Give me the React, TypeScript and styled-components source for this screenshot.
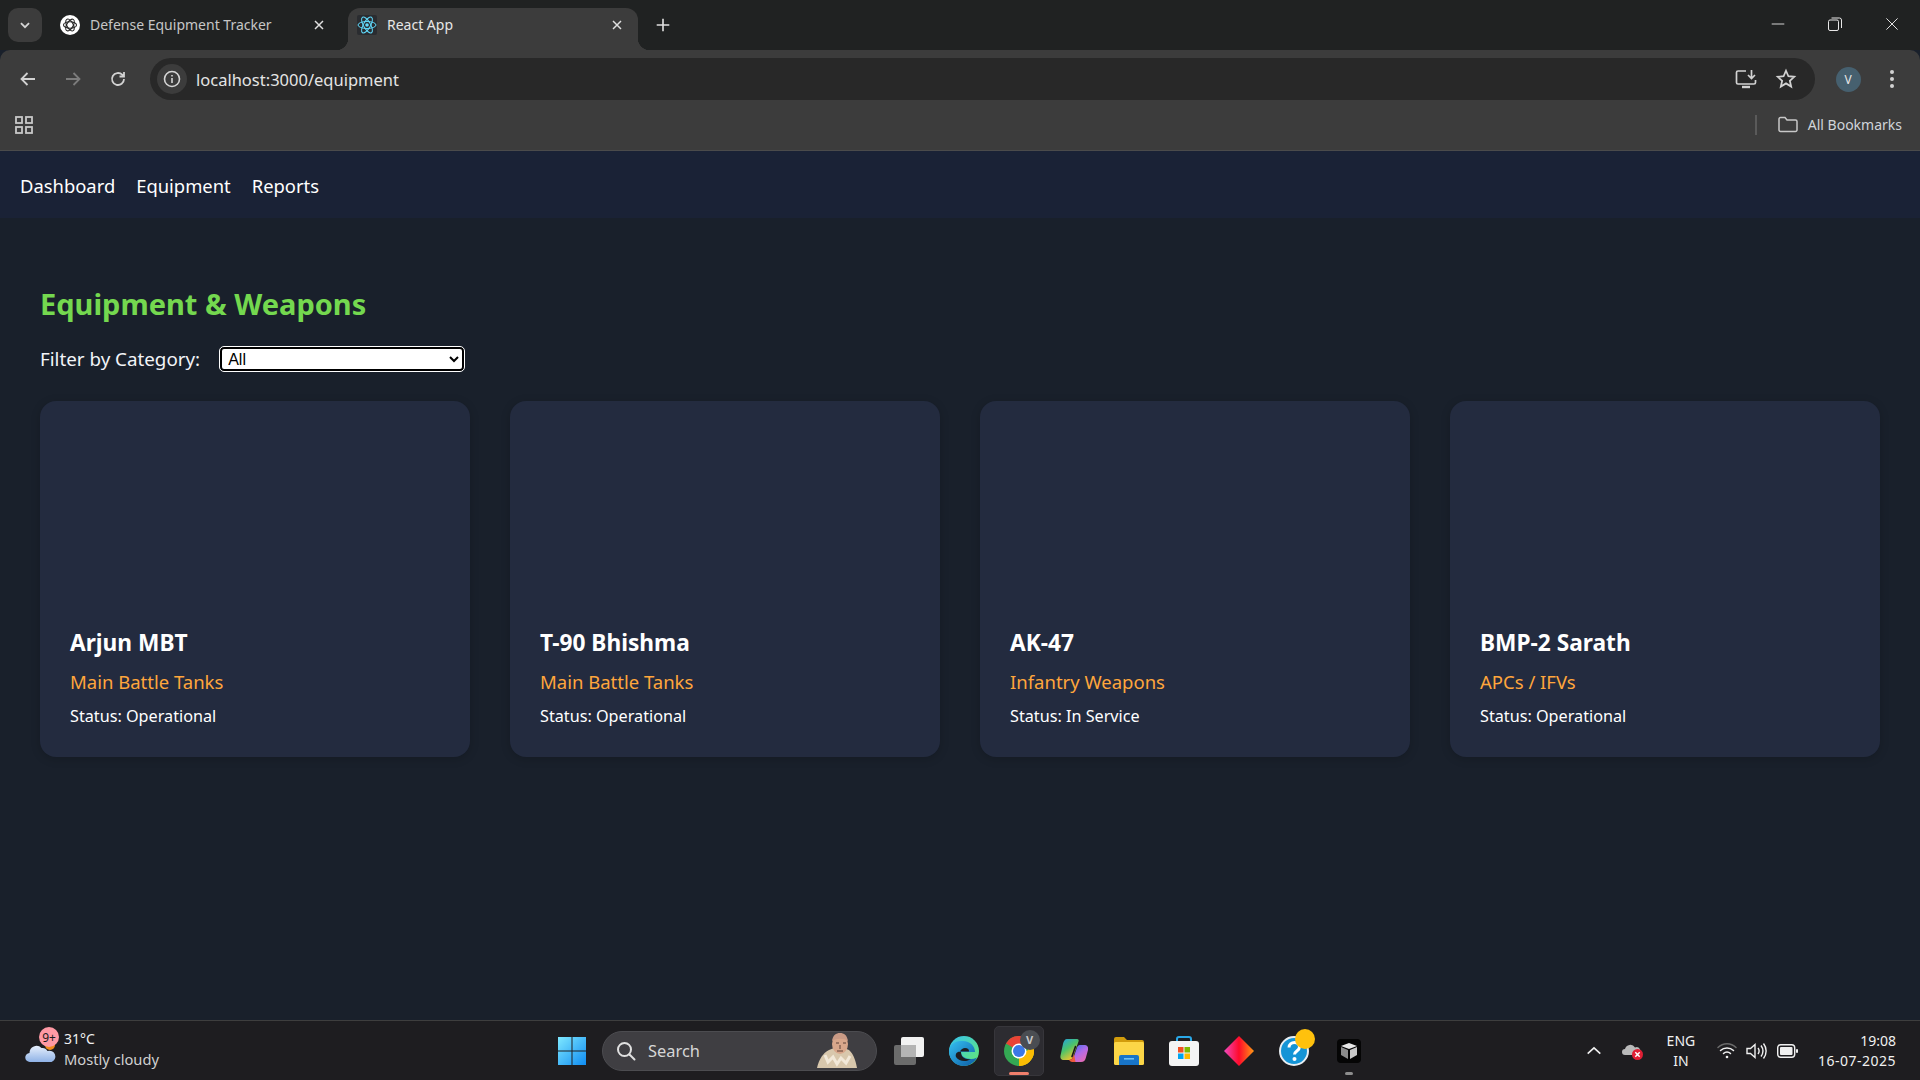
import React from "react";
import styled, { createGlobalStyle } from "styled-components";

const UI_FONT = `"Noto Sans", "Open Sans", Arial, sans-serif`;

const GlobalStyle = createGlobalStyle`
  html, body {
    margin: 0;
    padding: 0;
    height: 100%;
    overflow: hidden;
    background: #19202b;
    font-family: ${UI_FONT};
  }
  * {
    box-sizing: border-box;
  }
`;

const Screen = styled.div`
  display: flex;
  flex-direction: column;
  width: 1920px;
  height: 1080px;
  overflow: hidden;
`;

/* ---------- browser chrome ---------- */

const TabStrip = styled.div`
  display: flex;
  align-items: flex-end;
  height: 50px;
  background: #202222;
  flex: none;
`;

const TabSearchButton = styled.div`
  display: flex;
  align-items: center;
  justify-content: center;
  width: 34px;
  height: 34px;
  margin: 0 8px 8px 8px;
  border-radius: 10px;
  background: #3c3c3c;
  color: #d5d5d5;
`;

const Tab = styled.div<{ $active?: boolean }>`
  position: relative;
  display: flex;
  align-items: center;
  gap: 10px;
  width: 290px;
  height: 42px;
  margin-right: 8px;
  padding: 0 12px 8px ${(p) => (p.$active ? "9px" : "10px")};
  border-radius: 12px 12px 0 0;
  background: ${(p) => (p.$active ? "#3c3c3c" : "transparent")};
  color: ${(p) => (p.$active ? "#e6e6e6" : "#c6c6c6")};

  ${(p) =>
    p.$active &&
    `
    &::before, &::after {
      content: "";
      position: absolute;
      bottom: 0;
      width: 12px;
      height: 12px;
    }
    &::before {
      left: -12px;
      background: radial-gradient(circle at 0 0, transparent 12px, #3c3c3c 12.5px);
    }
    &::after {
      right: -12px;
      background: radial-gradient(circle at 100% 0, transparent 12px, #3c3c3c 12.5px);
    }
  `}
`;

const TabTitle = styled.span`
  flex: 1;
  font-size: 14px;
  white-space: nowrap;
  padding-bottom: 1px;
`;

const TabClose = styled.span`
  display: flex;
  width: 18px;
  justify-content: center;
  color: #e0e0e0;
`;

const NewTab = styled.div`
  display: flex;
  align-items: center;
  justify-content: center;
  width: 34px;
  height: 34px;
  margin: 0 0 8px 0;
  color: #e0e0e0;
`;

const WindowControls = styled.div`
  display: flex;
  align-self: stretch;
  margin-left: auto;
`;

const WindowButton = styled.div`
  display: flex;
  align-items: center;
  justify-content: center;
  width: 57px;
  height: 48px;
  color: #e8e8e8;
`;

const Toolbar = styled.div`
  display: flex;
  align-items: flex-end;
  height: 50px;
  padding: 0 6px 0 5px;
  background: #3c3c3c;
  border-radius: 10px 10px 0 0;
  flex: none;
`;

const ToolButton = styled.div<{ $dim?: boolean }>`
  display: flex;
  align-items: center;
  justify-content: center;
  width: 45px;
  height: 42px;
  color: ${(p) => (p.$dim ? "#7c7c7c" : "#d2d2d2")};
`;

const Omnibox = styled.div`
  display: flex;
  align-items: center;
  flex: 1;
  height: 42px;
  margin: 0 11px 0 10px;
  padding: 0 18px 0 7px;
  border-radius: 21px;
  background: #282828;
`;

const InfoChip = styled.div`
  display: flex;
  align-items: center;
  justify-content: center;
  width: 30px;
  height: 30px;
  border-radius: 50%;
  background: #3c3c3c;
  color: #d5d5d5;
  margin-right: 9px;
`;

const Url = styled.span`
  flex: 1;
  font-size: 16.5px;
  color: #e4e4e4;
`;

const OmniAction = styled.div<{ $gap?: number }>`
  display: flex;
  margin-left: ${(p) => p.$gap ?? 0}px;
  color: #d2d2d2;
`;

const Avatar = styled.div`
  display: flex;
  align-items: center;
  justify-content: center;
  width: 25px;
  height: 25px;
  border-radius: 50%;
  background: #46606f;
  color: #e6e6e6;
  font-size: 12px;
`;

const ToolSlot = styled.div`
  display: flex;
  align-items: center;
  justify-content: center;
  width: 44px;
  height: 42px;
  color: #d2d2d2;
`;

const BookmarksBar = styled.div`
  display: flex;
  align-items: center;
  height: 51px;
  padding: 0 18px 1px 15px;
  background: #3c3c3c;
  border-bottom: 1px solid #4b4b4b;
  color: #c8c8c8;
  flex: none;
`;

const Separator = styled.div`
  width: 2px;
  height: 20px;
  margin-left: auto;
  margin-right: 21px;
  background: #5a5a5a;
`;

const BookmarkLabel = styled.span`
  margin-left: 10px;
  font-size: 14px;
  color: #d0d4da;
`;

/* ---------- the app page ---------- */

const Nav = styled.nav`
  display: flex;
  align-items: center;
  gap: 21px;
  height: 67px;
  padding: 2px 20px 0;
  background: #1a2236;
  flex: none;
`;

const NavLink = styled.a`
  color: #fff;
  font-size: 18.4px;
  cursor: pointer;
`;

const Main = styled.main`
  flex: 1;
  min-height: 0;
  padding: 66px 40px 0;
  background: #19202b;
`;

const Title = styled.h1`
  margin: 0;
  color: #74d84f;
  font-size: 29px;
  line-height: 40px;
  font-weight: 700;
`;

const FilterRow = styled.div`
  display: flex;
  align-items: center;
  gap: 20px;
  margin-top: 23px;
  height: 24px;
`;

const FilterLabel = styled.label`
  color: #f2f4f8;
  font-size: 18.8px;
`;

const CategorySelect = styled.select`
  width: 244px;
  height: 24px;
  padding: 0 2px;
  border: 2px solid #000;
  border-radius: 4px;
  outline: 1px solid #fff;
  background: #fff;
  color: #000;
  font-family: "Liberation Sans", Arial, sans-serif;
  font-size: 16px;
`;

const CardGrid = styled.div`
  display: grid;
  grid-template-columns: repeat(4, 1fr);
  gap: 40px;
  margin-top: 30px;
`;

const Card = styled.article`
  display: flex;
  flex-direction: column;
  height: 356px;
  padding: 0 30px;
  border-radius: 16px;
  background: #232b3f;
  box-shadow: 0 2px 10px rgba(0, 0, 0, 0.18);
`;

const CardName = styled.h3`
  margin: 226px 0 0;
  color: #fff;
  font-size: 22.7px;
  line-height: 32px;
  font-weight: 700;
`;

const CardCategory = styled.p`
  margin: 8px 0 0;
  color: #ffa63c;
  font-size: 18.5px;
  line-height: 30px;
`;

const CardStatus = styled.p`
  margin: 5px 0 0;
  color: #fff;
  font-size: 16.2px;
  line-height: 28px;
`;

/* ---------- windows taskbar ---------- */

const Taskbar = styled.footer`
  display: grid;
  grid-template-columns: 1fr auto 1fr;
  align-items: center;
  height: 60px;
  background: #1e1d20;
  border-top: 1px solid #3e3e3e;
  flex: none;
`;

const Weather = styled.div`
  position: relative;
  display: flex;
  align-items: center;
  gap: 7px;
  padding-left: 25px;
`;

const WeatherBadge = styled.span`
  position: absolute;
  left: 39px;
  top: -2px;
  display: flex;
  align-items: center;
  justify-content: center;
  width: 20px;
  height: 20px;
  border-radius: 50%;
  background: #ff99a4;
  color: #1a1a1a;
  font-size: 12px;
`;

const WeatherText = styled.div`
  display: flex;
  flex-direction: column;
  padding-bottom: 3px;
`;

const WeatherTemp = styled.span`
  color: #f0f0f0;
  font-size: 14px;
  line-height: 20px;
`;

const WeatherDesc = styled.span`
  color: #d0d0d0;
  font-size: 14.7px;
  line-height: 20px;
`;

const TaskIcons = styled.div`
  display: flex;
  align-items: center;
`;

const SearchBox = styled.div`
  display: flex;
  align-items: center;
  width: 275px;
  height: 40px;
  margin: 0 4px 0 3px;
  padding: 0 17px 0 13px;
  border-radius: 20px;
  border: 1px solid #4c4c50;
  background: #3f3e42;
  color: #d6d6d6;
`;

const SearchLabel = styled.span`
  flex: 1;
  margin-left: 12px;
  font-size: 16.4px;
`;

const TaskSlot = styled.div`
  position: relative;
  display: flex;
  align-items: center;
  justify-content: center;
  width: 55px;
  height: 50px;
`;

const ActiveBox = styled.span`
  position: absolute;
  left: 3px;
  right: 2px;
  top: 0;
  bottom: 0;
  border-radius: 5px;
  background: #2d2c31;
  border: 1px solid #37363b;
`;

const RunningMark = styled.span<{ $active?: boolean }>`
  position: absolute;
  left: 50%;
  bottom: 1px;
  width: ${(p) => (p.$active ? "20px" : "8px")};
  height: 3px;
  margin-left: ${(p) => (p.$active ? "-10px" : "-4px")};
  border-radius: 2px;
  background: ${(p) => (p.$active ? "#f07f6c" : "#8d8d8d")};
`;

const IconOverlay = styled.span`
  position: relative;
  display: flex;
`;

const ChromeBadge = styled.span`
  position: absolute;
  right: -6px;
  top: -6px;
  display: flex;
  align-items: center;
  justify-content: center;
  width: 20px;
  height: 20px;
  border-radius: 50%;
  background: #4a4d52;
  color: #c9c9c9;
  font-size: 11px;
  font-weight: 700;
`;

const YellowDot = styled.span`
  position: absolute;
  right: -6px;
  top: -7px;
  width: 20px;
  height: 20px;
  border-radius: 50%;
  background: #ffc10d;
`;

const Tray = styled.div`
  display: flex;
  align-items: center;
  justify-content: flex-end;
  padding-right: 24px;
  color: #f0f0f0;
`;

const TrayIcon = styled.span<{ $w: number; $gap?: number }>`
  display: flex;
  justify-content: center;
  width: ${(p) => p.$w}px;
  margin-left: ${(p) => p.$gap ?? 0}px;
`;

const LangBlock = styled.div`
  display: flex;
  flex-direction: column;
  align-items: center;
  width: 50px;
  margin: 0 7px 0 12px;
  font-size: 14px;
  line-height: 20px;
`;

const ClockBlock = styled.div`
  display: flex;
  flex-direction: column;
  align-items: flex-end;
  margin-left: 14px;
  font-size: 14px;
  line-height: 20px;
`;

const ClockDate = styled.span`
  letter-spacing: 0.5px;
`;

/* ---------- icons ---------- */

const ReactFavicon = () => (
  <svg width="20" height="20" viewBox="0 0 20 20">
    <rect width="20" height="20" rx="2" fill="#2a2c30" />
    <g fill="none" stroke="#61dafb" strokeWidth="1">
      <ellipse cx="10" cy="10" rx="9" ry="3.5" />
      <ellipse cx="10" cy="10" rx="9" ry="3.5" transform="rotate(60 10 10)" />
      <ellipse cx="10" cy="10" rx="9" ry="3.5" transform="rotate(120 10 10)" />
    </g>
    <circle cx="10" cy="10" r="1.8" fill="#61dafb" />
  </svg>
);

const GptFavicon = () => (
  <svg width="20" height="20" viewBox="0 0 20 20">
    <circle cx="10" cy="10" r="10" fill="#fff" />
    <g fill="none" stroke="#222" strokeWidth="1.1">
      <ellipse cx="10" cy="10" rx="6.5" ry="3.2" />
      <ellipse cx="10" cy="10" rx="6.5" ry="3.2" transform="rotate(60 10 10)" />
      <ellipse cx="10" cy="10" rx="6.5" ry="3.2" transform="rotate(120 10 10)" />
    </g>
  </svg>
);

const Line = ({ d, size = 20, sw = 1.8 }: { d: string; size?: number; sw?: number }) => (
  <svg width={size} height={size} viewBox="0 0 20 20" fill="none" stroke="currentColor" strokeWidth={sw}>
    <path d={d} />
  </svg>
);

const InstallIcon = () => (
  <svg width="22" height="20" viewBox="0 0 22 20" fill="none" stroke="currentColor" strokeWidth="1.7">
    <path d="M11 2H3a1.5 1.5 0 0 0-1.5 1.5v10A1.5 1.5 0 0 0 3 15h16a1.5 1.5 0 0 0 1.5-1.5V11" />
    <path d="M16.5 1v8M13 6l3.5 3.5L20 6" />
    <path d="M7 18h8" strokeWidth="2.4" />
  </svg>
);

const AppsIcon = () => (
  <svg width="18" height="18" viewBox="0 0 18 18" fill="none" stroke="currentColor" strokeWidth="1.8">
    <rect x="1" y="1" width="6" height="6" />
    <rect x="11" y="1" width="6" height="6" />
    <rect x="1" y="11" width="6" height="6" />
    <rect x="11" y="11" width="6" height="6" />
  </svg>
);

const FolderIcon = () => (
  <svg width="20" height="17" viewBox="0 0 20 17" fill="none" stroke="currentColor" strokeWidth="1.5">
    <path d="M1 3a1.5 1.5 0 0 1 1.5-1.5H7l2 2.5h8.5A1.5 1.5 0 0 1 19 5.5v8.5a1.5 1.5 0 0 1-1.5 1.5h-15A1.5 1.5 0 0 1 1 14z" />
  </svg>
);

const CloudSun = () => (
  <svg width="32" height="26" viewBox="0 0 32 26">
    <defs>
      <linearGradient id="cloudFill" x1="0" y1="0" x2="0" y2="1">
        <stop offset="0" stopColor="#e6effc" />
        <stop offset="1" stopColor="#8fb2e6" />
      </linearGradient>
    </defs>
    <circle cx="25" cy="7" r="5" fill="#f08a1c" />
    <path
      d="M5 24a4.5 4.5 0 0 1-.5-9 7 7 0 0 1 12-5 6 6 0 0 1 6 3 5.5 5.5 0 0 1 4 11z"
      fill="url(#cloudFill)"
    />
  </svg>
);

const WindowsLogo = () => (
  <svg width="30" height="30" viewBox="0 0 30 30">
    <defs>
      <linearGradient id="winFill" x1="0" y1="0" x2="1" y2="1">
        <stop offset="0" stopColor="#7fe8ff" />
        <stop offset="1" stopColor="#0f8cf2" />
      </linearGradient>
    </defs>
    <path d="M1 1h13.5v13.5H1zM15.5 1H29v13.5H15.5zM1 15.5h13.5V29H1zM15.5 15.5H29V29H15.5z" fill="url(#winFill)" />
  </svg>
);

const SearchGlass = () => (
  <svg width="20" height="20" viewBox="0 0 20 20" fill="none" stroke="#e0e0e0" strokeWidth="2">
    <circle cx="8.5" cy="8.5" r="6.5" />
    <path d="M13.5 13.5l5 5" strokeLinecap="round" />
  </svg>
);

const SearchDoodle = () => (
  <svg width="44" height="36" viewBox="0 0 44 36">
    <path d="M2 35c2-9 6-15 12-18l10-4 10 4c4 4 6 8 8 18z" fill="#d8c7ac" />
    <path d="M10 22l3 7 5-5 4 7 4-6 5 5 4-7" fill="none" stroke="#f2e8d8" strokeWidth="3" />
    <ellipse cx="25" cy="11" rx="8" ry="10" fill="#d9a78b" />
    <path d="M17 8c1-6 4-8 8-8s7 2 8 8c-4-3-12-3-16 0z" fill="#c99a85" />
    <path d="M21 10h3M28 10h3M25 12v4M22 18h6" stroke="#5d4037" strokeWidth="1" fill="none" />
  </svg>
);

const TaskView = () => (
  <svg width="30" height="28" viewBox="0 0 30 28">
    <rect x="0" y="8" width="22" height="20" rx="2" fill="#6b6b6b" />
    <rect x="7" y="0" width="23" height="20" rx="2" fill="#f2f2f2" />
    <rect x="7" y="8" width="15" height="12" fill="#b4b4b4" />
  </svg>
);

const EdgeIcon = () => (
  <svg width="30" height="30" viewBox="0 0 30 30">
    <defs>
      <linearGradient id="edgeA" x1="0" y1="0" x2="1" y2="1">
        <stop offset="0" stopColor="#35c1f1" />
        <stop offset="1" stopColor="#0c59a4" />
      </linearGradient>
      <linearGradient id="edgeB" x1="0" y1="0" x2="1" y2="1">
        <stop offset="0" stopColor="#35c1f1" />
        <stop offset="1" stopColor="#66eb6e" />
      </linearGradient>
    </defs>
    <circle cx="15" cy="15" r="15" fill="url(#edgeB)" />
    <path d="M0 15C1 6 8 5 14 5c7 0 12 5 12 11H12c0 4 4 7 10 7 2 0 4-.5 6-1.5C25 27 20 30 15 30 7 30 0 24 0 15z" fill="url(#edgeA)" />
    <path d="M11 15.5c1-2 3-3.5 5-3.5 3 0 4 1.5 4 3.5z" fill="#1e1d20" />
    <path d="M12 16c0 5 4 8 10 7-4 3-12 3-15-2-1-3 1-6 5-5z" fill="#1e1d20" />
  </svg>
);

const ChromeIcon = () => (
  <svg width="30" height="30" viewBox="0 0 30 30">
    <circle cx="15" cy="15" r="15" fill="#34a853" />
    <path d="M15 15L2 7.5A15 15 0 0 1 28 7.5z" fill="#ea4335" />
    <path d="M15 15h15a15 15 0 0 1-15 15z" fill="#fbbc04" />
    <path d="M28 7.5A15 15 0 0 1 15 30l6-12z" fill="#fbbc04" />
    <circle cx="15" cy="15" r="7.5" fill="#fff" />
    <circle cx="15" cy="15" r="6" fill="#3b78e7" />
  </svg>
);

const CopilotIcon = () => (
  <svg width="28" height="26" viewBox="0 0 28 26">
    <defs>
      <linearGradient id="copA" x1="0" y1="0" x2="0.6" y2="1">
        <stop offset="0" stopColor="#1f9fe8" />
        <stop offset="0.5" stopColor="#4cc36a" />
        <stop offset="1" stopColor="#f8c52a" />
      </linearGradient>
      <linearGradient id="copB" x1="0.2" y1="0" x2="0.9" y2="1">
        <stop offset="0" stopColor="#4f6ff0" />
        <stop offset="0.45" stopColor="#b16be8" />
        <stop offset="1" stopColor="#f06aa8" />
      </linearGradient>
    </defs>
    <path d="M7 1h10c1.5 0 2 1 1.5 2.5L13 19c-.8 2-2 3-4 3H4c-3 0-4-2-3.5-4.5L3 6c.6-3 2-5 4-5z" fill="url(#copA)" />
    <path d="M12 24h9c3 0 4-1.5 4.8-4L28 12c.6-3-1-5-3-5h-5c-1.5 0-2.5 1-3 2.5L13 21c-.5 1.5-.5 3-1 3z" fill="url(#copB)" />
    <path d="M9 22c2 0 3.3-1 4-3l1-3 1.5 8H12c-1 0-2-1-3-2z" fill="#ee5a3c" />
    <path d="M15.5 8.5l-3.5 10" stroke="#17161a" strokeWidth="1.6" fill="none" strokeLinecap="round" />
  </svg>
);

const ExplorerIcon = () => (
  <svg width="30" height="28" viewBox="0 0 30 28">
    <path d="M0 2a2 2 0 0 1 2-2h8l3 3h15a2 2 0 0 1 2 2v3H0z" fill="#d29c0c" />
    <rect x="0" y="5" width="30" height="23" rx="1.5" fill="#fcd647" />
    <path d="M5 20a2 2 0 0 1 2-2h16a2 2 0 0 1 2 2v8H5z" fill="#1874c8" />
    <rect x="10" y="21" width="10" height="1.6" fill="#6fc0f2" />
  </svg>
);

const StoreIcon = () => (
  <svg width="30" height="30" viewBox="0 0 30 30">
    <path d="M8 6V3a2 2 0 0 1 2-2h10a2 2 0 0 1 2 2v3" fill="none" stroke="#2aa8e8" strokeWidth="2" />
    <rect x="0" y="5" width="30" height="25" rx="3" fill="#f4f4f4" />
    <rect x="9" y="11" width="5.5" height="5.5" fill="#f25022" />
    <rect x="15.5" y="11" width="5.5" height="5.5" fill="#7fba00" />
    <rect x="9" y="17.5" width="5.5" height="5.5" fill="#00a4ef" />
    <rect x="15.5" y="17.5" width="5.5" height="5.5" fill="#ffb900" />
  </svg>
);

const DiamondIcon = () => (
  <svg width="30" height="30" viewBox="0 0 30 30">
    <defs>
      <linearGradient id="diaFill" x1="0" y1="0" x2="1" y2="0">
        <stop offset="0" stopColor="#f04ac0" />
        <stop offset="0.5" stopColor="#ff0a2a" />
        <stop offset="1" stopColor="#ff9a14" />
      </linearGradient>
    </defs>
    <path d="M15 0l15 15-15 15L0 15z" fill="url(#diaFill)" />
  </svg>
);

const HelpIcon = () => (
  <svg width="30" height="30" viewBox="0 0 30 30">
    <circle cx="15" cy="15" r="14" fill="#1494d6" stroke="#e8eef2" strokeWidth="2" />
    <path d="M10 11.5c0-3 2.5-5 5.5-5s5 2 5 4.5c0 4-5 4-5 7.5" fill="none" stroke="#fff" strokeWidth="3" />
    <circle cx="15.5" cy="23" r="2" fill="#fff" />
  </svg>
);

const BlackApp = () => (
  <svg width="24" height="24" viewBox="0 0 24 24">
    <rect width="24" height="24" rx="4" fill="#050505" />
    <path d="M4 7l8-3 8 3-8 3z" fill="#e8e8e8" />
    <path d="M4 8l7 3v9l-7-4z" fill="#8c8c8c" />
    <path d="M20 8l-7 3v9l7-4z" fill="#c8c8c8" />
  </svg>
);

const CloudError = () => (
  <svg width="22" height="20" viewBox="0 0 22 20">
    <path d="M3 14a3 3 0 0 1 0-6 5.5 5.5 0 0 1 10-1.5 4 4 0 0 1 3 7.5z" fill="#b9b9b9" />
    <circle cx="15.5" cy="13.5" r="5.5" fill="#e01f34" />
    <path d="M13.3 11.3l4.4 4.4M17.7 11.3l-4.4 4.4" stroke="#fff" strokeWidth="1.5" />
  </svg>
);

const WifiIcon = () => (
  <svg width="20" height="18" viewBox="0 0 20 18" fill="none" stroke="currentColor" strokeWidth="1.5" strokeLinecap="round">
    <path d="M1 5.5c5-5 13-5 18 0" stroke="#6a6a6a" />
    <path d="M3.5 8.5c3.5-3.5 9.5-3.5 13 0" />
    <path d="M6.5 11.5c2-2 5-2 7 0" />
    <circle cx="10" cy="15" r="1.3" fill="currentColor" stroke="none" />
  </svg>
);

const VolumeIcon = () => (
  <svg width="21" height="18" viewBox="0 0 21 18" fill="none" stroke="currentColor" strokeWidth="1.4">
    <path d="M1 6.5h3.5L9 2.5v13l-4.5-4H1z" />
    <path d="M12 6c1.5 2 1.5 4 0 6M15 3.5c2.5 3.5 2.5 7.500 0 11M17.500 1.500c3.500 4.500 3.500 10.500 0 15" />
  </svg>
);

const BatteryIcon = () => (
  <svg width="21" height="14" viewBox="0 0 21 14">
    <rect x=".7" y=".7" width="17" height="12.6" rx="3" fill="none" stroke="currentColor" strokeWidth="1.4" />
    <rect x="3" y="3" width="12.5" height="8" rx="1" fill="currentColor" />
    <rect x="19" y="5" width="2" height="4" rx="1" fill="currentColor" />
  </svg>
);

/* ---------- data ---------- */

interface Equipment {
  name: string;
  category: string;
  status: string;
}

const equipment: Equipment[] = [
  { name: "Arjun MBT", category: "Main Battle Tanks", status: "Operational" },
  { name: "T-90 Bhishma", category: "Main Battle Tanks", status: "Operational" },
  { name: "AK-47", category: "Infantry Weapons", status: "In Service" },
  { name: "BMP-2 Sarath", category: "APCs / IFVs", status: "Operational" },
];

const App: React.FC = () => (
  <Screen>
    <GlobalStyle />

    <TabStrip>
      <TabSearchButton>
        <Line d="M5.5 8l4.5 4.5L14.5 8" size={18} sw={2} />
      </TabSearchButton>
      <Tab>
        <GptFavicon />
        <TabTitle>Defense Equipment Tracker</TabTitle>
        <TabClose>
          <Line d="M5 5l10 10M15 5L5 15" size={16} sw={1.8} />
        </TabClose>
      </Tab>
      <Tab $active>
        <ReactFavicon />
        <TabTitle>React App</TabTitle>
        <TabClose>
          <Line d="M5 5l10 10M15 5L5 15" size={16} sw={1.8} />
        </TabClose>
      </Tab>
      <NewTab>
        <Line d="M10 3v14M3 10h14" size={18} sw={1.8} />
      </NewTab>
      <WindowControls>
        <WindowButton>
          <Line d="M3 10h14" size={18} sw={1} />
        </WindowButton>
        <WindowButton>
          <svg width="14" height="14" viewBox="0 0 14 14" fill="none" stroke="currentColor" strokeWidth="1">
            <rect x=".5" y="3" width="10" height="10.5" rx="1.5" />
            <path d="M3.5 1h8a2 2 0 0 1 2 2v8" />
          </svg>
        </WindowButton>
        <WindowButton>
          <Line d="M3 3l14 14M17 3L3 17" size={16} sw={1.2} />
        </WindowButton>
      </WindowControls>
    </TabStrip>

    <Toolbar>
      <ToolButton>
        <Line d="M17 10H4M9.5 4L3.5 10l6 6" />
      </ToolButton>
      <ToolButton $dim>
        <Line d="M3 10h13M10.5 4l6 6-6 6" />
      </ToolButton>
      <ToolButton>
        <Line d="M16 10a6 6 0 1 1-1.8-4.3L16 7.5M16 3v4.5h-4.5" />
      </ToolButton>
      <Omnibox>
        <InfoChip>
          <svg width="18" height="18" viewBox="0 0 18 18" fill="none" stroke="currentColor" strokeWidth="1.6">
            <circle cx="9" cy="9" r="7.5" />
            <path d="M9 8v5M9 5v1.6" />
          </svg>
        </InfoChip>
        <Url>localhost:3000/equipment</Url>
        <OmniAction>
          <InstallIcon />
        </OmniAction>
        <OmniAction $gap={18}>
          <Line d="M10 2.5l2.2 5 5.3.5-4 3.6 1.2 5.3L10 14l-4.7 2.9 1.2-5.3-4-3.6 5.3-.5z" size={22} sw={1.6} />
        </OmniAction>
      </Omnibox>
      <ToolSlot>
        <Avatar>V</Avatar>
      </ToolSlot>
      <ToolSlot>
        <svg width="6" height="20" viewBox="0 0 6 20" fill="currentColor">
          <circle cx="3" cy="3" r="2" />
          <circle cx="3" cy="10" r="2" />
          <circle cx="3" cy="17" r="2" />
        </svg>
      </ToolSlot>
    </Toolbar>

    <BookmarksBar>
      <AppsIcon />
      <Separator />
      <FolderIcon />
      <BookmarkLabel>All Bookmarks</BookmarkLabel>
    </BookmarksBar>

    <Nav>
      <NavLink>Dashboard</NavLink>
      <NavLink>Equipment</NavLink>
      <NavLink>Reports</NavLink>
    </Nav>

    <Main>
      <Title>Equipment &amp; Weapons</Title>
      <FilterRow>
        <FilterLabel>Filter by Category:</FilterLabel>
        <CategorySelect defaultValue="All">
          <option>All</option>
          <option>Main Battle Tanks</option>
          <option>Infantry Weapons</option>
          <option>APCs / IFVs</option>
        </CategorySelect>
      </FilterRow>
      <CardGrid>
        {equipment.map((item) => (
          <Card key={item.name}>
            <CardName>{item.name}</CardName>
            <CardCategory>{item.category}</CardCategory>
            <CardStatus>Status: {item.status}</CardStatus>
          </Card>
        ))}
      </CardGrid>
    </Main>

    <Taskbar>
      <Weather>
        <CloudSun />
        <WeatherBadge>9+</WeatherBadge>
        <WeatherText>
          <WeatherTemp>31°C</WeatherTemp>
          <WeatherDesc>Mostly cloudy</WeatherDesc>
        </WeatherText>
      </Weather>

      <TaskIcons>
        <TaskSlot>
          <WindowsLogo />
        </TaskSlot>
        <SearchBox>
          <SearchGlass />
          <SearchLabel>Search</SearchLabel>
          <SearchDoodle />
        </SearchBox>
        <TaskSlot>
          <TaskView />
        </TaskSlot>
        <TaskSlot>
          <EdgeIcon />
        </TaskSlot>
        <TaskSlot>
          <ActiveBox />
          <IconOverlay>
            <ChromeIcon />
            <ChromeBadge>V</ChromeBadge>
          </IconOverlay>
          <RunningMark $active />
        </TaskSlot>
        <TaskSlot>
          <CopilotIcon />
        </TaskSlot>
        <TaskSlot>
          <ExplorerIcon />
        </TaskSlot>
        <TaskSlot>
          <StoreIcon />
        </TaskSlot>
        <TaskSlot>
          <DiamondIcon />
        </TaskSlot>
        <TaskSlot>
          <IconOverlay>
            <HelpIcon />
            <YellowDot />
          </IconOverlay>
        </TaskSlot>
        <TaskSlot>
          <BlackApp />
          <RunningMark />
        </TaskSlot>
      </TaskIcons>

      <Tray>
        <TrayIcon $w={20}>
          <Line d="M3 13l7-6.5 7 6.5" size={18} sw={1.8} />
        </TrayIcon>
        <TrayIcon $w={22} $gap={18}>
          <CloudError />
        </TrayIcon>
        <LangBlock>
          <span>ENG</span>
          <span>IN</span>
        </LangBlock>
        <TrayIcon $w={29}>
          <WifiIcon />
        </TrayIcon>
        <TrayIcon $w={29}>
          <VolumeIcon />
        </TrayIcon>
        <TrayIcon $w={33}>
          <BatteryIcon />
        </TrayIcon>
        <ClockBlock>
          <span>19:08</span>
          <ClockDate>16-07-2025</ClockDate>
        </ClockBlock>
      </Tray>
    </Taskbar>
  </Screen>
);

export default App;
